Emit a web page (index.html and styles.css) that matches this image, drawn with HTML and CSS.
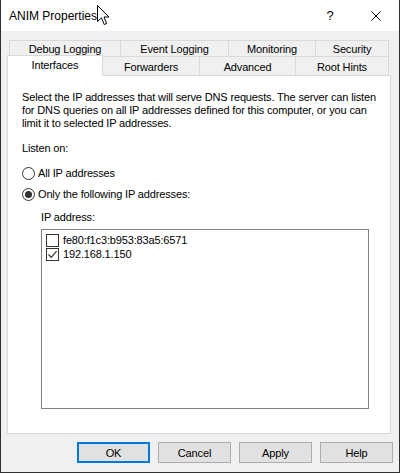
FILE: index.html
```html
<!DOCTYPE html>
<html>
<head>
<meta charset="utf-8">
<link rel="stylesheet" href="styles.css">
</head>
<body>
<div class="window">
  <div class="titlebar">
    <span class="title">ANIM Properties</span>
    <span class="tb-btn help">?</span>
    <span class="tb-btn close">
      <svg width="10" height="10" viewBox="0 0 10 10"><path d="M0.5 0.5 L9.5 9.5 M9.5 0.5 L0.5 9.5" stroke="#000" stroke-width="1" fill="none"/></svg>
    </span>
    <svg class="cursor" width="13" height="21" viewBox="0 0 13 21"><path d="M0.5 0.5 L0.5 16.5 L4.5 12.8 L7.2 19.5 L9.6 18.5 L7 12 L12 12 Z" fill="#fff" stroke="#000" stroke-width="1" stroke-linejoin="miter"/></svg>
  </div>
  <div class="body">
    <div class="tabrow back">
      <div class="tab">Debug Logging</div>
      <div class="tab">Event Logging</div>
      <div class="tab">Monitoring</div>
      <div class="tab last">Security</div>
    </div>
    <div class="tabrow front">
      <div class="tab selected">Interfaces</div>
      <div class="tab">Forwarders</div>
      <div class="tab">Advanced</div>
      <div class="tab last">Root Hints</div>
    </div>
    <div class="panel">
      <p class="desc">Select the IP addresses that will serve DNS requests. The server can listen for DNS queries on all IP addresses defined for this computer, or you can limit it to selected IP addresses.</p>
      <div class="label listen">Listen on:</div>
      <div class="radio first"><span class="circle"></span><span>All IP addresses</span></div>
      <div class="radio second"><span class="circle on"></span><span>Only the following IP addresses:</span></div>
      <div class="label ip">IP address:</div>
      <div class="listbox">
        <div class="item"><span class="check"></span><span>fe80:f1c3:b953:83a5:6571</span></div>
        <div class="item"><span class="check"><svg width="11" height="11" viewBox="0 0 11 11"><path d="M1.5 5.5 L4.2 8.3 L9.6 2.2" stroke="#333" stroke-width="1.2" fill="none"/></svg></span><span>192.168.1.150</span></div>
      </div>
    </div>
    <div class="buttons">
      <div class="btn default">OK</div>
      <div class="btn">Cancel</div>
      <div class="btn">Apply</div>
      <div class="btn">Help</div>
    </div>
  </div>
</div>
</body>
</html>
```
FILE: styles.css
```css
html, body {
  margin: 0;
  padding: 0;
  background: #ffffff;
}
body {
  font-family: "Liberation Sans", Arial, sans-serif;
  font-size: 11px;
  letter-spacing: -0.15px;
  color: #000;
}
.window {
  width: 400px;
  height: 473px;
  box-sizing: border-box;
  border: 1px solid #2e2e2e;
  border-top: none;
  display: flex;
  flex-direction: column;
}
.titlebar {
  position: relative;
  height: 31px;
  background: #fff;
  display: flex;
  align-items: center;
  flex: none;
}
.title {
  font-size: 12px;
  letter-spacing: 0;
  margin-left: 8px;
  flex: 1;
}
.tb-btn {
  width: 46px;
  height: 31px;
  display: flex;
  align-items: center;
  justify-content: center;
}
.help {
  font-size: 13px;
}
.close svg {
  display: block;
}
.cursor {
  position: absolute;
  left: 96px;
  top: 5px;
}
.body {
  flex: 1;
  background: #f0f0f0;
  padding-top: 9px;
  display: flex;
  flex-direction: column;
}
.tabrow {
  display: grid;
  margin-left: 8px;
  width: 380px;
}
.tabrow.back {
  grid-template-columns: 111px 108px 87px 74px;
  height: 16px;
}
.tabrow.front {
  grid-template-columns: 93px 97px 96px 94px;
  height: 19px;
  position: relative;
  z-index: 1;
}
.tab {
  box-sizing: border-box;
  border-top: 1px solid #d9d9d9;
  border-left: 1px solid #d9d9d9;
  display: flex;
  align-items: center;
  justify-content: center;
  background: #f0f0f0;
  line-height: 13px;
}
.tab.last {
  border-right: 1px solid #d9d9d9;
}
.tabrow.back .tab {
  padding-top: 2px;
  line-height: 12px;
  align-items: flex-start;
}
.tabrow.front .tab {
  padding-top: 2px;
}
.tab.selected {
  background: #fff;
  margin: -1px -1px -1px -2px;
  border-right: 1px solid #d9d9d9;
  padding-top: 0 !important;
  padding-bottom: 1px;
}
.panel {
  margin-left: 6px;
  width: 384px;
  height: 359px;
  box-sizing: border-box;
  border: 1px solid #d9d9d9;
  background: #fff;
  padding: 15px 14px 0 14px;
  flex: none;
}
.desc {
  margin: 0;
  line-height: 13px;
  width: 360px;
}
.label {
  line-height: 13px;
}
.listen {
  margin-top: 12px;
}
.radio {
  display: flex;
  align-items: center;
  height: 13px;
  line-height: 13px;
}
.radio.first {
  margin-top: 12px;
}
.radio.second {
  margin-top: 8px;
}
.circle {
  width: 13px;
  height: 13px;
  box-sizing: border-box;
  border: 1px solid #333;
  border-radius: 50%;
  margin-right: 3px;
  display: flex;
  align-items: center;
  justify-content: center;
  flex: none;
}
.circle.on::after {
  content: "";
  width: 7px;
  height: 7px;
  border-radius: 50%;
  background: #333;
}
.ip {
  margin-top: 10px;
  margin-left: 19px;
}
.listbox {
  margin-top: 5px;
  margin-left: 19px;
  width: 328px;
  height: 180px;
  box-sizing: border-box;
  border: 1px solid #828282;
  padding: 3px 4px;
}
.item {
  display: flex;
  align-items: center;
  height: 14px;
  line-height: 14px;
}
.check {
  width: 13px;
  height: 13px;
  box-sizing: border-box;
  border: 1px solid #333;
  margin-right: 4px;
  flex: none;
  display: flex;
  align-items: center;
  justify-content: center;
}
.check svg {
  display: block;
}
.buttons {
  display: flex;
  justify-content: flex-end;
  gap: 8px;
  margin-top: 8px;
  padding-right: 6px;
}
.btn {
  width: 73px;
  height: 21px;
  box-sizing: border-box;
  border: 1px solid #adadad;
  background: #e1e1e1;
  display: flex;
  align-items: center;
  justify-content: center;
}
.btn.default {
  border: 2px solid #0078d7;
}
```
